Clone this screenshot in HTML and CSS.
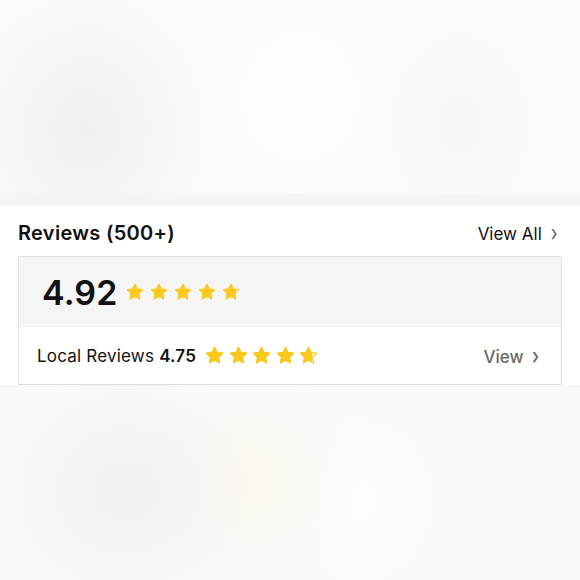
FILE: index.html
```html
<!DOCTYPE html>
<html><head>
	<title>Reviews</title>
	<link rel="stylesheet" href="styles.css">
</head>
<body>
	<svg class="defs" width="0" height="0">
		<defs>
			<linearGradient id="part92">
				<stop offset="82%" stop-color="#f9c81a"/>
				<stop offset="82%" stop-color="#fdf3cf"/>
			</linearGradient>
			<linearGradient id="part75">
				<stop offset="68%" stop-color="#f9c81a"/>
				<stop offset="68%" stop-color="#fdf3cf"/>
			</linearGradient>
			<path id="star" d="M12 2.2l2.95 6.05 6.65.95-4.8 4.7 1.13 6.62L12 17.4l-5.93 3.12 1.13-6.62-4.8-4.7 6.65-.95z"/>
		</defs>
	</svg>

	<div class="hero"></div>
	<div class="divider"></div>

	<section class="reviews">
		<div class="reviews-head">
			<h2 class="title">Reviews (500+)</h2>
			<a class="view-all">View All <span class="chev">&#8250;</span></a>
		</div>

		<div class="card">
			<div class="card-top">
				<span class="score">4.92</span>
				<span class="stars stars-sm">
					<svg viewBox="0 0 24 24"><use href="#star"/></svg>
					<svg viewBox="0 0 24 24"><use href="#star"/></svg>
					<svg viewBox="0 0 24 24"><use href="#star"/></svg>
					<svg viewBox="0 0 24 24"><use href="#star"/></svg>
					<svg viewBox="0 0 24 24" class="part92"><use href="#star"/></svg>
				</span>
			</div>
			<div class="card-row">
				<span class="local">Local Reviews <b>4.75</b></span>
				<span class="stars stars-md">
					<svg viewBox="0 0 24 24"><use href="#star"/></svg>
					<svg viewBox="0 0 24 24"><use href="#star"/></svg>
					<svg viewBox="0 0 24 24"><use href="#star"/></svg>
					<svg viewBox="0 0 24 24"><use href="#star"/></svg>
					<svg viewBox="0 0 24 24" class="part75"><use href="#star"/></svg>
				</span>
				<a class="view">View <span class="chev">&#8250;</span></a>
			</div>
		</div>
	</section>
</body>
</html>
```

FILE: styles.css
```css
body {
	margin: 0;
	height: 580px;
	font-family: Inter, "Liberation Sans", sans-serif;
	color: #111;
	background:
		radial-gradient(ellipse 130px 120px at 125px 490px, #f1f0f0, rgba(241,240,240,0)),
		radial-gradient(ellipse 110px 120px at 250px 480px, #fcf7ef, rgba(252,247,239,0)),
		radial-gradient(ellipse 90px 100px at 360px 500px, #fdfdfc, rgba(253,253,252,0)),
		#f9f9f9;
}
.defs {
	position: absolute;
}
.hero {
	height: 194px;
	background:
		radial-gradient(ellipse 100px 110px at 300px 97px, #fefefe, rgba(254,254,254,0)),
		radial-gradient(ellipse 130px 150px at 86px 130px, #efefef, rgba(239,239,239,0)),
		radial-gradient(ellipse 90px 120px at 460px 125px, #f6f6f6, rgba(246,246,246,0)),
		#fbfbfb;
}
.divider {
	height: 12px;
	background-color: #f4f4f4;
}
.reviews {
	background-color: #fff;
	padding: 14px 18px 0 18px;
}
.reviews-head {
	display: flex;
	align-items: center;
	justify-content: space-between;
	height: 26px;
	margin-bottom: 10px;
}
.title {
	margin: 0;
	font-size: 20px;
	font-weight: 600;
	letter-spacing: 0.3px;
}
.view-all {
	font-size: 17px;
	color: #111;
	margin-right: 4px;
}
.chev {
	display: inline-block;
	font-size: 22px;
	line-height: 1;
	color: #666;
	margin-left: 3px;
	transform: scaleX(0.8);
	vertical-align: -1px;
}
.card {
	border: 1px solid #e2e2e2;
	border-bottom-color: #dcdcdc;
}
.card-top {
	display: flex;
	align-items: center;
	height: 70px;
	padding-left: 23px;
	background-color: #f5f5f5;
}
.score {
	font-size: 34px;
	font-weight: 600;
	letter-spacing: 0.2px;
	margin-right: 7px;
}
.stars {
	display: flex;
	gap: 4px;
}
.stars svg {
	fill: #f9c81a;
	stroke: #f9c81a;
	stroke-width: 1.2;
	stroke-linejoin: round;
}
.stars-sm svg {
	width: 20px;
	height: 20px;
}
.stars-md svg {
	width: 21px;
	height: 21px;
}
.stars-md {
	gap: 2.5px;
}
.stars svg.part92 {
	fill: url(#part92);
}
.stars svg.part75 {
	fill: url(#part75);
}
.card-row {
	display: flex;
	align-items: center;
	height: 57px;
	padding: 0 21px 0 18px;
}
.local {
	font-size: 17px;
	letter-spacing: 0.2px;
	margin-right: 8px;
}
.local b {
	font-weight: 600;
}
.view {
	margin-left: auto;
	font-size: 17px;
	font-weight: 500;
	color: #6a6a6a;
}
```
